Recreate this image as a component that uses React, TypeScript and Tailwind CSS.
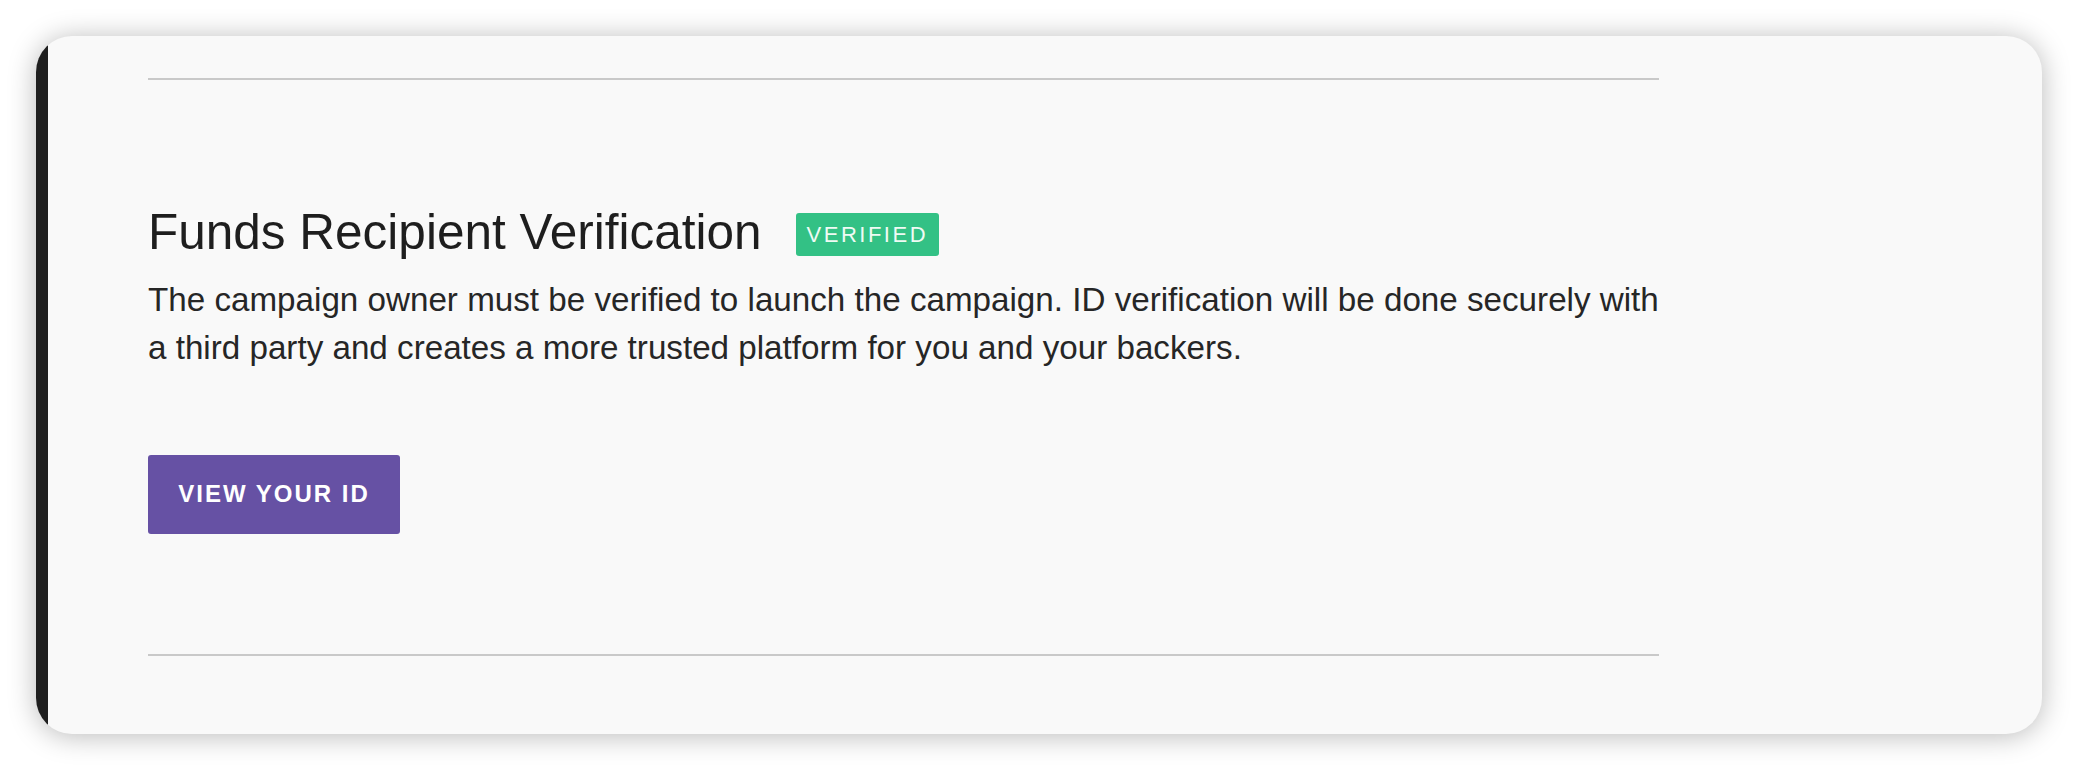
import React from 'react';

const VerificationCard: React.FC = () => {
  return (
    <div className="flex overflow-hidden rounded-[36px] bg-[#f9f9f9] shadow-[0_2px_28px_rgba(0,0,0,0.28)]">
      {/* dark accent strip */}
      <div className="w-[12px] shrink-0 bg-[#1f1f1f]" />
      <div className="pl-[100px] pt-[42px] pb-[78px]">
        <div className="w-[1511px]">
          <div className="h-[2px] bg-[#c9c9c9]" />

          <div className="mt-[127px] flex items-start">
            <h2 className="text-[49.5px] leading-none font-normal text-[#1e1e1e]">Funds Recipient Verification</h2>
            <span className="ml-[34px] mt-[6px] flex h-[43px] items-center rounded-[3px] bg-[#33c185] px-[11px] text-[22px] leading-none tracking-[2.5px] text-[#effbf4]">
              VERIFIED
            </span>
          </div>

          <p className="mt-[19px] w-[1530px] text-[33.2px] leading-[48px] text-[#262626]">
            The campaign owner must be verified to launch the campaign. ID verification will be done securely with
            <br />
            a third party and creates a more trusted platform for you and your backers.
          </p>

          <button
            type="button"
            className="mt-[83px] flex h-[79px] w-[252px] items-center justify-center rounded-[3px] bg-[#6651a4] text-[24px] font-bold leading-none tracking-[2px] text-white"
          >
            VIEW YOUR ID
          </button>

          <div className="mt-[120px] h-[2px] bg-[#c9c9c9]" />
        </div>
      </div>
    </div>
  );
};

export default function App() {
  return (
    <div className="min-h-screen bg-white p-[36px] font-['Liberation_Sans',Arial,sans-serif]">
      <VerificationCard />
    </div>
  );
}
